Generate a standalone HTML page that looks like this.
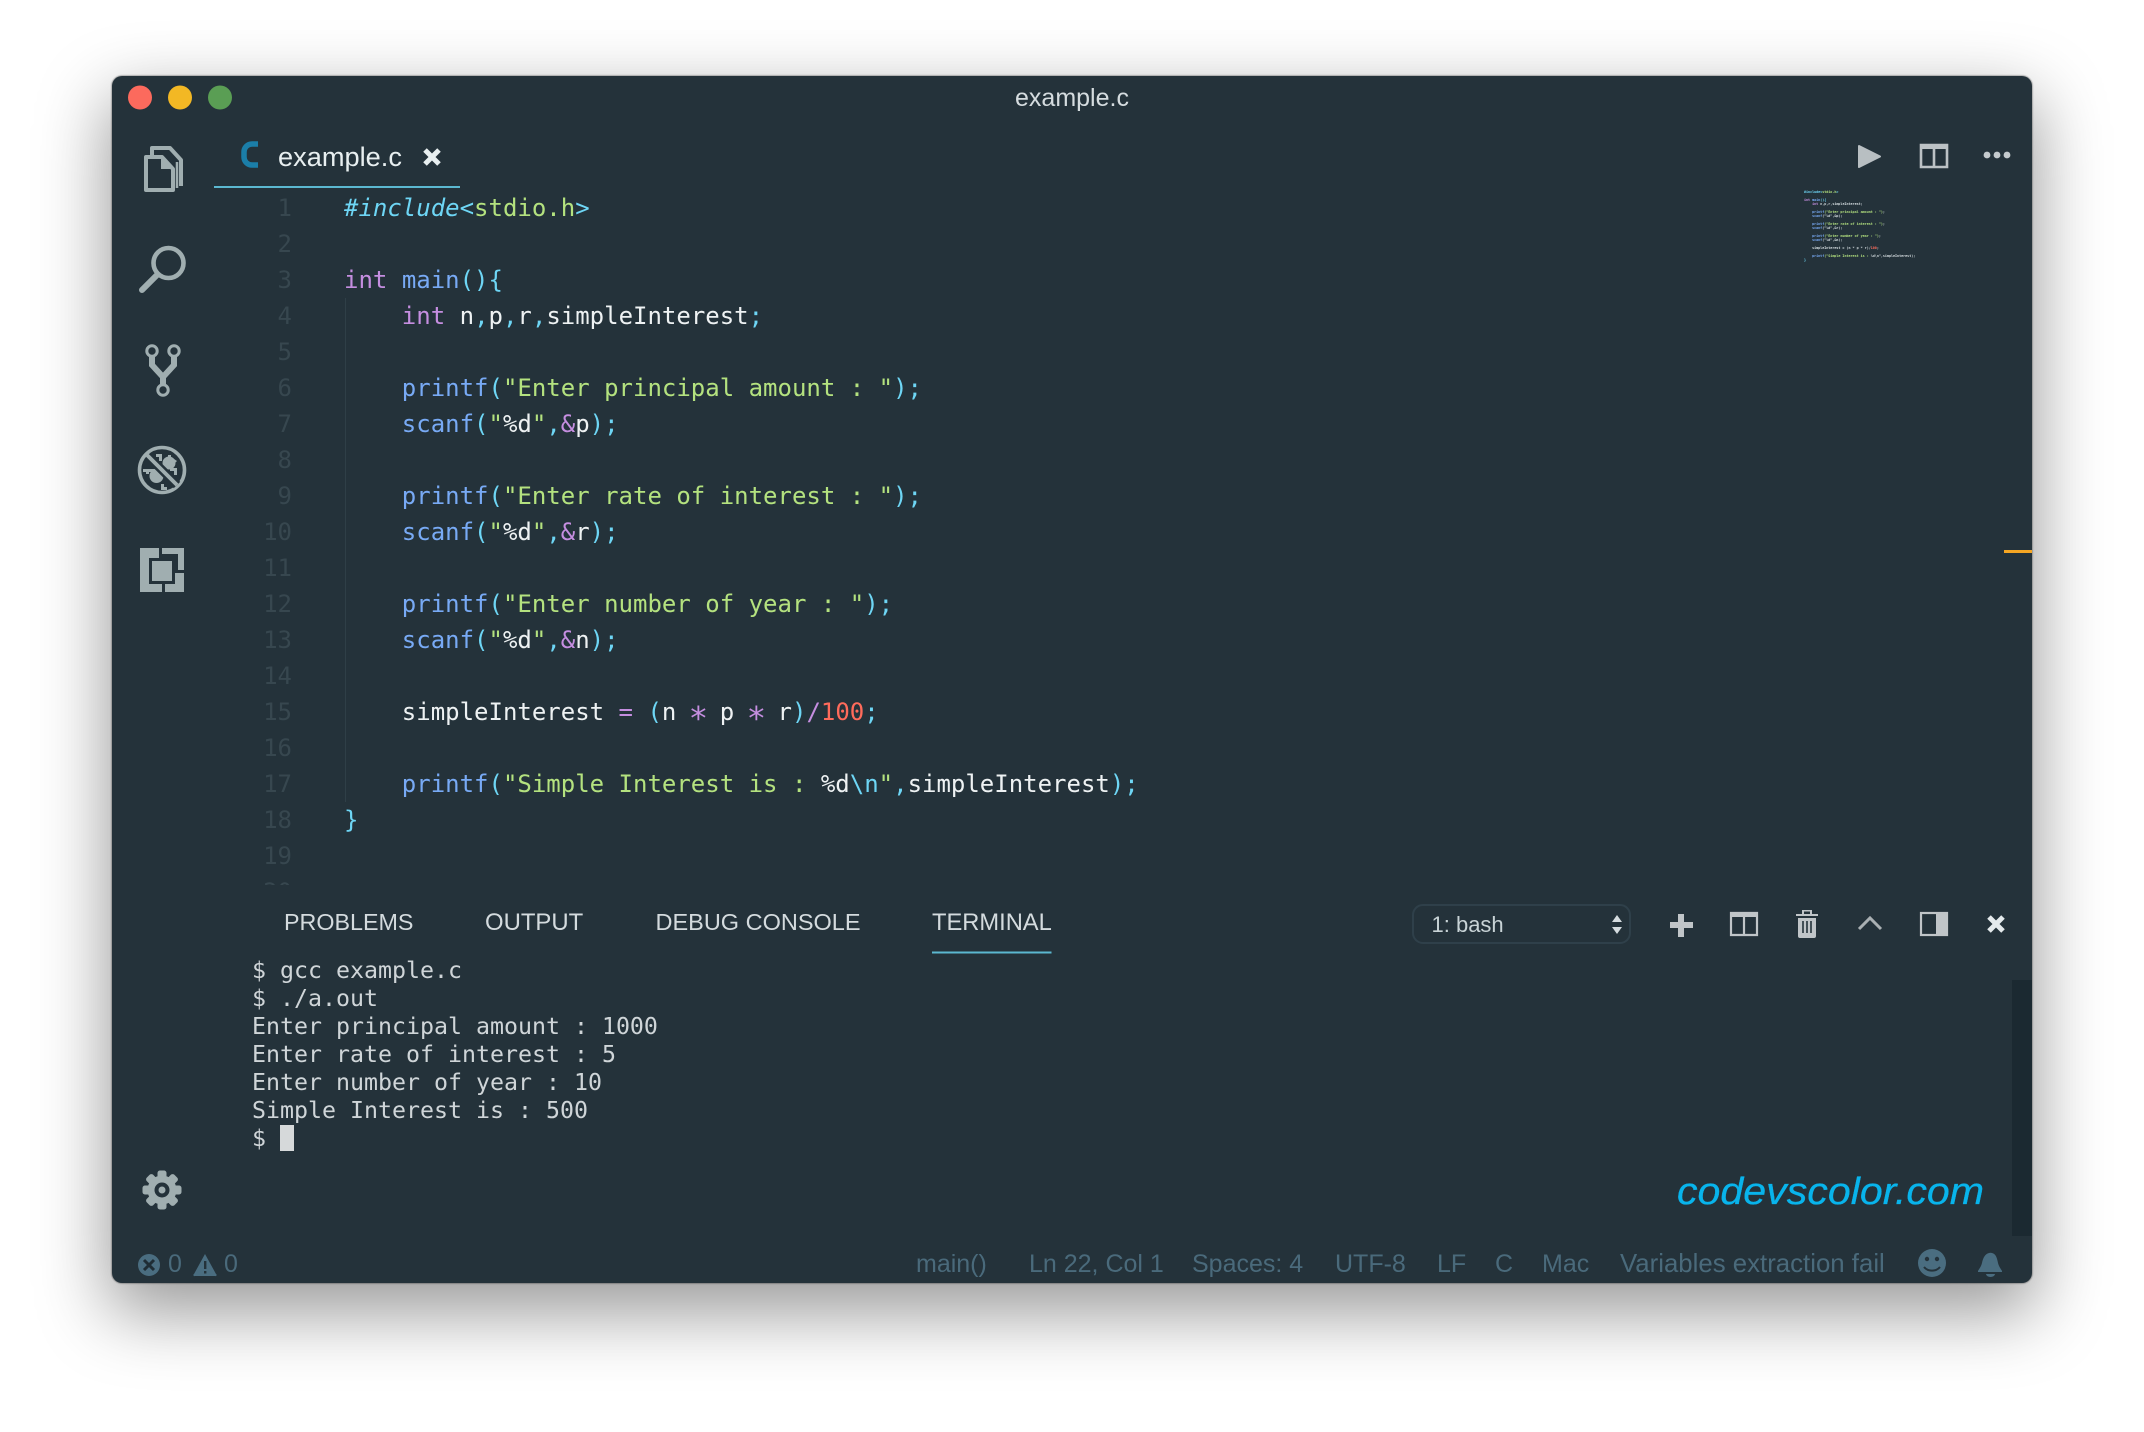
<!DOCTYPE html>
<html><head><meta charset="utf-8"><title>example.c</title>
<style>
html,body{margin:0;padding:0;background:#fff;width:2144px;height:1432px;overflow:hidden}
*{box-sizing:border-box}
#win{position:absolute;left:112px;top:76px;width:1920px;height:1207px;background:#24323a;border-radius:10px;box-shadow:0 26px 70px 4px rgba(0,0,0,.4),0 0 1px 1px rgba(0,0,0,.25);}
.abs,.t{position:absolute;white-space:pre}
.s{font-family:"Liberation Sans",sans-serif}
.ln{position:absolute;left:242px;width:50px;margin-top:1px;text-align:right;color:#37474f;font:24px/36px "DejaVu Sans Mono",monospace}
.c{position:absolute;left:344px;margin-top:1px;color:#eef2f3;font:24px/36px "DejaVu Sans Mono",monospace;white-space:pre}
.k{color:#c58ee0}.f{color:#78aaf5}.p{color:#6ed6f5}.g{color:#b4e27f}.r{color:#ff6b5b}
.a{display:inline-block;transform:scale(1.35)}
#clip{position:absolute;left:0;top:0;width:2144px;height:885px;overflow:hidden}
.pt{position:absolute;top:907px;font:23.5px/30px "Liberation Sans",sans-serif;color:#d4dbde}
.tr{position:absolute;left:252px;margin-top:1px;font:23.25px/28px "DejaVu Sans Mono",monospace;color:#cfd5d8;white-space:pre}
.st{position:absolute;top:1250px;font:25px/28px "Liberation Sans",sans-serif;color:#4a6a7b;white-space:pre}
#mini{position:absolute;left:1804px;top:190px;font:bold 3.36px/4px "DejaVu Sans Mono",monospace;color:#d5dde0;white-space:pre}
</style></head><body>
<div id="win"></div>

<svg class="abs" style="left:0;top:0" width="2144" height="1432" viewBox="0 0 2144 1432">
<circle cx="140" cy="97.5" r="12" fill="#fc6a5d"/><circle cx="180" cy="97.5" r="12" fill="#f3b824"/><circle cx="220" cy="97.5" r="12" fill="#5a9e54"/>
<rect x="214" y="186" width="246" height="2" fill="#5bb8d0"/>
<rect x="345" y="298" width="1" height="504" fill="#2f3f47"/>
<!-- files -->
<g fill="none" stroke="#a0aeb0" stroke-width="4" stroke-linejoin="round">
<path d="M146 157h16l11 12v21h-27z"/>
<path d="M152 155v-7h18l11 12v26"/>
<path d="M177 162v26" stroke-width="2.5"/>
</g>
<path d="M161 157l12 12h-12z" fill="#a0aeb0"/>
<!-- search -->
<circle cx="168.5" cy="263" r="15" fill="none" stroke="#a0aeb0" stroke-width="4.6"/>
<path d="M157 275L142 290" stroke="#a0aeb0" stroke-width="6" stroke-linecap="round"/>
<!-- git -->
<g fill="none" stroke="#a0aeb0">
<path d="M152 356v9l11 12v8M174 356v9l-11 12" stroke-width="6"/>
<circle cx="152" cy="351" r="5.2" stroke-width="3" fill="#24323a"/><circle cx="174" cy="351" r="5.2" stroke-width="3" fill="#24323a"/><circle cx="163" cy="390" r="5.2" stroke-width="3" fill="#24323a"/>
</g>
<!-- bug -->
<circle cx="162" cy="470" r="22.5" fill="none" stroke="#a0aeb0" stroke-width="3.6"/>
<g fill="#a0aeb0">
<circle cx="156.500" cy="476" r="7"/>
<circle cx="169" cy="463" r="6.500"/>
<path d="M156 454h6v7h-3v-4h-3zM143 469h12v3h-12zM146 469h3v5h-3zM168 455h3v5h-3zM174 468h3v7h-3zM170 468h6v3h-6zM161 484h3v3h3v3h-6z"/>
<path d="M174 459l3 2-5 5-3-2z"/>
</g>
<path d="M148 456L177 485" stroke="#24323a" stroke-width="9"/>
<path d="M147 455L177 485" stroke="#a0aeb0" stroke-width="3.8"/>
<!-- ext -->
<rect x="140" y="548" width="44" height="44" fill="#a0aeb0"/>
<rect x="149" y="558" width="26" height="26" fill="#24323a"/>
<rect x="152" y="561" width="20" height="20" fill="#a0aeb0"/>
<path d="M159 548h3v10h-3zM162 554h16v16h-6v-12h-10zM172 570h12v3h-12zM162 584h3v8h-3z" fill="#24323a"/>
<!-- gear -->
<g transform="translate(162,1190)" fill="#a0aeb0">
<circle r="14.5"/>
<g><rect x="-4.500" y="-19.500" width="9" height="10" rx="2.500"/><rect x="-4.500" y="9.500" width="9" height="10" rx="2.500"/><rect y="-4.500" x="-19.500" height="9" width="10" rx="2.500"/><rect y="-4.500" x="9.500" height="9" width="10" rx="2.500"/></g>
<g transform="rotate(45)"><rect x="-4.500" y="-19.500" width="9" height="10" rx="2.500"/><rect x="-4.500" y="9.500" width="9" height="10" rx="2.500"/><rect y="-4.500" x="-19.500" height="9" width="10" rx="2.500"/><rect y="-4.500" x="9.500" height="9" width="10" rx="2.500"/></g>
<circle r="7.500" fill="#24323a"/><circle r="3.500" fill="#a0aeb0"/>
</g>
<!-- tab C -->
<path d="M258 145h-6a8 8 0 0 0-8 8v5a8 8 0 0 0 8 8h6" transform="translate(0,-1)" fill="none" stroke="#1b7ea8" stroke-width="5.500"/>
<!-- tab x -->
<path d="M425 150L439 164M439 150L425 164" stroke="#e8eff0" stroke-width="5"/>
<!-- top right icons -->
<path d="M1859 146L1880 156.500L1859 167z" fill="#b8bfc2" stroke="#b8bfc2" stroke-width="2" stroke-linejoin="round"/>
<path d="M1921 145h26v22h-26zM1934 148v19" fill="none" stroke="#bcc2c5" stroke-width="2.600"/><rect x="1920" y="144" width="28" height="5" fill="#bcc2c5"/>
<circle cx="1987" cy="155" r="3.400" fill="#c5cbce"/><circle cx="1997" cy="155" r="3.400" fill="#c5cbce"/><circle cx="2007" cy="155" r="3.400" fill="#c5cbce"/>
<rect x="2004" y="550" width="28" height="3" fill="#f5a623"/>
<!-- terminal scrollbar -->
<rect x="2012" y="980" width="20" height="256" fill="#1b2931"/>
<rect x="932" y="951.500" width="119.500" height="2" fill="#5bb8d0"/>
<!-- dropdown -->
<rect x="1413" y="905" width="217" height="38" rx="10" fill="none" stroke="#2f404a" stroke-width="2"/>
<path d="M1617 915l5 7h-10zM1617 934l5-7h-10z" fill="#d5dcdf"/>
<!-- panel icons -->
<path d="M1678 914h6v8h9v6h-9v9h-6v-9h-8v-6h8z" fill="#c0c5c8"/>
<path d="M1731 913h26v22h-26zM1744 915v20" fill="none" stroke="#c0c5c8" stroke-width="2.200"/><rect x="1730" y="912" width="28" height="5" fill="#c0c5c8"/>
<path d="M1796 914h6v-4h10v4h6v2h-22zM1798 918h18v18a2 2 0 0 1-2 2h-14a2 2 0 0 1-2-2z" fill="#c0c5c8"/>
<path d="M1804 911.500h6v2.500h-6z" fill="#24323a"/>
<path d="M1803 921v12M1807 921v12M1811 921v12" stroke="#24323a" stroke-width="1.600"/>
<path d="M1859 929L1870 918L1881 929" fill="none" stroke="#a9b0b3" stroke-width="3"/>
<rect x="1921" y="913" width="26" height="22" fill="none" stroke="#c0c5c8" stroke-width="2.200"/><rect x="1936" y="913" width="11" height="22" fill="#c0c5c8"/>
<path d="M1989 917L2003 931M2003 917L1989 931" stroke="#e4eaec" stroke-width="5"/>
<!-- cursor -->
<rect x="280" y="1125" width="14" height="26" fill="#d6d9da"/>
<!-- status icons -->
<circle cx="149" cy="1265" r="11" fill="#4a6d80"/>
<path d="M144 1260l10 10M154 1260l-10 10" stroke="#1f2d35" stroke-width="3"/>
<path d="M205 1254l11 20a1 1 0 0 1-1 2h-20a1 1 0 0 1-1-2z" fill="#4a6d80"/>
<rect x="204" y="1261" width="2.400" height="8" fill="#24323a"/><rect x="204" y="1271" width="2.400" height="2.500" fill="#24323a"/>
<circle cx="1932" cy="1263" r="14" fill="#4a6d80"/>
<circle cx="1927" cy="1259" r="2.200" fill="#24323a"/><circle cx="1937" cy="1259" r="2.200" fill="#24323a"/>
<path d="M1924 1267a10 9 0 0 0 16 0" fill="none" stroke="#24323a" stroke-width="2"/>
<path d="M1989 1253a5 5 0 0 1 3 0c4 1 5 5 6 10c1 4 3 6 4 8v1h-24v-1c1-2 3-4 4-8c1-5 3-9 7-10z" fill="#4a6d80"/>
<path d="M1986 1274h9a4.500 3 0 0 1-9 0z" fill="#4a6d80"/>
<!-- watermark -->
<text x="1677" y="1204" textLength="307" lengthAdjust="spacingAndGlyphs" font-family="Liberation Sans,sans-serif" font-style="italic" font-size="38" fill="#08b4ec" stroke="#08b4ec" stroke-width=".3">codevscolor.com</text>
</svg>

<div class="t s" style="left:1012px;top:84px;width:120px;text-align:center;font-size:25px;line-height:28px;color:#d5dcdf">example.c</div>
<div class="t s" style="left:278px;top:141px;font-size:27.200px;line-height:32px;color:#e8eff0">example.c</div>

<div id="clip">
<div class="ln" style="top:189px">1</div>
<div class="ln" style="top:225px">2</div>
<div class="ln" style="top:261px">3</div>
<div class="ln" style="top:297px">4</div>
<div class="ln" style="top:333px">5</div>
<div class="ln" style="top:369px">6</div>
<div class="ln" style="top:405px">7</div>
<div class="ln" style="top:441px">8</div>
<div class="ln" style="top:477px">9</div>
<div class="ln" style="top:513px">10</div>
<div class="ln" style="top:549px">11</div>
<div class="ln" style="top:585px">12</div>
<div class="ln" style="top:621px">13</div>
<div class="ln" style="top:657px">14</div>
<div class="ln" style="top:693px">15</div>
<div class="ln" style="top:729px">16</div>
<div class="ln" style="top:765px">17</div>
<div class="ln" style="top:801px">18</div>
<div class="ln" style="top:837px">19</div>
<div class="ln" style="top:873px">20</div>

<div class="c" style="top:189px"><span class="p" style="font-style:italic">#include</span><span class="p">&lt;</span><span class="g">stdio.h</span><span class="p">&gt;</span></div>
<div class="c" style="top:261px"><span class="k">int</span> <span class="f">main</span><span class="p">(){</span></div>
<div class="c" style="top:297px">    <span class="k">int</span> n<span class="p">,</span>p<span class="p">,</span>r<span class="p">,</span>simpleInterest<span class="p">;</span></div>
<div class="c" style="top:369px">    <span class="f">printf</span><span class="p">(</span><span class="g">"Enter principal amount : "</span><span class="p">);</span></div>
<div class="c" style="top:405px">    <span class="f">scanf</span><span class="p">(</span><span class="g">"</span>%d<span class="g">"</span><span class="p">,</span><span class="k">&amp;</span>p<span class="p">);</span></div>
<div class="c" style="top:477px">    <span class="f">printf</span><span class="p">(</span><span class="g">"Enter rate of interest : "</span><span class="p">);</span></div>
<div class="c" style="top:513px">    <span class="f">scanf</span><span class="p">(</span><span class="g">"</span>%d<span class="g">"</span><span class="p">,</span><span class="k">&amp;</span>r<span class="p">);</span></div>
<div class="c" style="top:585px">    <span class="f">printf</span><span class="p">(</span><span class="g">"Enter number of year : "</span><span class="p">);</span></div>
<div class="c" style="top:621px">    <span class="f">scanf</span><span class="p">(</span><span class="g">"</span>%d<span class="g">"</span><span class="p">,</span><span class="k">&amp;</span>n<span class="p">);</span></div>
<div class="c" style="top:693px">    simpleInterest <span class="k">=</span> <span class="p">(</span>n <span class="k a">∗</span> p <span class="k a">∗</span> r<span class="p">)</span><span class="k">/</span><span class="r">100</span><span class="p">;</span></div>
<div class="c" style="top:765px">    <span class="f">printf</span><span class="p">(</span><span class="g">"Simple Interest is : </span>%d<span class="p">\n</span><span class="g">"</span><span class="p">,</span>simpleInterest<span class="p">);</span></div>
<div class="c" style="top:801px"><span class="p">}</span></div>
</div>

<div id="mini"><span class="p">#include&lt;</span><span class="g">stdio.h</span><span class="p">&gt;</span>

<span class="k">int</span> <span class="f">main</span><span class="p">(){</span>
    <span class="k">int</span> n,p,r,simpleInterest;

    <span class="f">printf</span><span class="g">("Enter principal amount : ")</span>;
    <span class="f">scanf</span>("%d",&amp;p);

    <span class="f">printf</span><span class="g">("Enter rate of interest : ")</span>;
    <span class="f">scanf</span>("%d",&amp;r);

    <span class="f">printf</span><span class="g">("Enter number of year : ")</span>;
    <span class="f">scanf</span>("%d",&amp;n);

    simpleInterest = (n * p * r)/<span class="r">100</span>;

    <span class="f">printf</span><span class="g">("Simple Interest is : </span>%d\n",simpleInterest);
<span class="p">}</span></div>

<div class="pt" style="left:284px;font-size:23.3px">PROBLEMS</div>
<div class="pt" style="left:485px;top:908px;font-size:23.9px">OUTPUT</div>
<div class="pt" style="left:655.500px">DEBUG CONSOLE</div>
<div class="pt" style="left:932px;top:908px;font-size:23.7px">TERMINAL</div>
<div class="t s" style="left:1431.500px;top:911px;font-size:22px;line-height:28px;color:#c8d3d6">1: bash</div>

<div class="tr" style="top:956px">$ gcc example.c</div>
<div class="tr" style="top:984px">$ ./a.out</div>
<div class="tr" style="top:1012px">Enter principal amount : 1000</div>
<div class="tr" style="top:1040px">Enter rate of interest : 5</div>
<div class="tr" style="top:1068px">Enter number of year : 10</div>
<div class="tr" style="top:1096px">Simple Interest is : 500</div>
<div class="tr" style="top:1124px">$</div>

<div class="st" style="left:168px">0</div>
<div class="st" style="left:224px">0</div>
<div class="st" style="left:916px">main()</div>
<div class="st" style="left:1029px">Ln 22, Col 1</div>
<div class="st" style="left:1192px">Spaces: 4</div>
<div class="st" style="left:1335px">UTF-8</div>
<div class="st" style="left:1437px">LF</div>
<div class="st" style="left:1495px">C</div>
<div class="st" style="left:1542px">Mac</div>
<div class="st" style="left:1620px;font-size:25.8px">Variables extraction fail</div>
</body></html>
